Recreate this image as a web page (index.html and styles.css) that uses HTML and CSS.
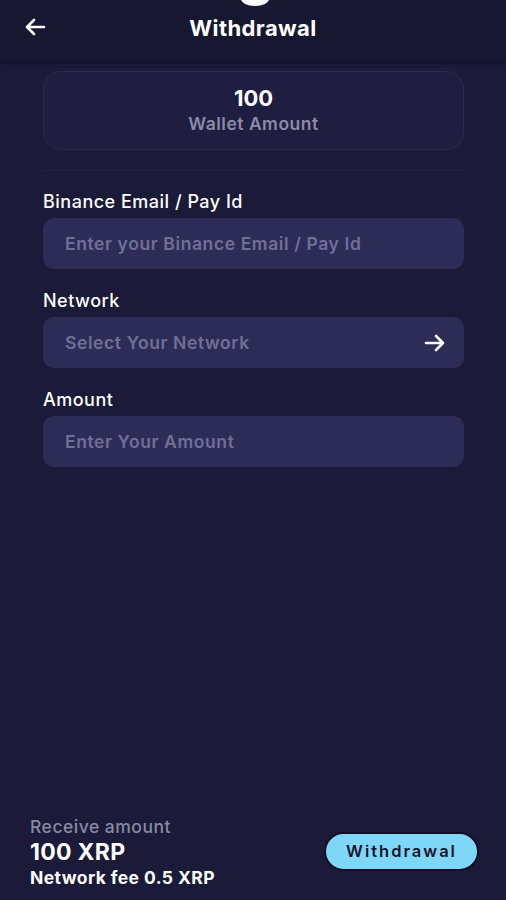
FILE: index.html
```html
<!DOCTYPE html>
<html lang="en">
<head>
  <meta charset="UTF-8">
  <title>Withdrawal</title>
  <meta name="viewport" content="width=device-width, initial-scale=1">
  <link rel="stylesheet" href="styles.css">
</head>
<body>
  <div class="screen">
    <header class="topbar">
      <span class="notch"></span>
      <a href="#" class="back">
        <svg width="22" height="18" viewBox="0 0 22 18"><path d="M20 9H3M10 2L3 9l7 7" fill="none" stroke="#fff" stroke-width="2.6" stroke-linecap="round" stroke-linejoin="round"/></svg>
      </a>
      <h1>Withdrawal</h1>
    </header>

    <main class="content">
      <div class="wallet">
        <div class="wallet-value">100</div>
        <div class="wallet-label">Wallet Amount</div>
      </div>
      <hr class="divider">

      <label class="field-label">Binance Email / Pay Id</label>
      <div class="field">Enter your Binance Email / Pay Id</div>

      <label class="field-label">Network</label>
      <div class="field select">
        <span>Select Your Network</span>
        <svg width="22" height="18" viewBox="0 0 22 18"><path d="M2 9h17M12 2l7 7-7 7" fill="none" stroke="#fff" stroke-width="2.6" stroke-linecap="round" stroke-linejoin="round"/></svg>
      </div>

      <label class="field-label">Amount</label>
      <div class="field">Enter Your Amount</div>
    </main>

    <footer class="summary">
      <div class="receive">
        <div class="receive-label">Receive amount</div>
        <div class="receive-value">100 XRP</div>
        <div class="receive-fee">Network fee 0.5 XRP</div>
      </div>
      <button class="submit">Withdrawal</button>
    </footer>
  </div>
</body>
</html>
```

FILE: styles.css
```css
* { box-sizing: border-box; }
body { margin: 0; background: #1b1a38; font-family: Inter, "Noto Sans", sans-serif; color: #fff; }

.screen {
  height: 900px;
  display: flex;
  flex-direction: column;
}

.topbar {
  position: relative;
  height: 61px;
  background: #181731;
  display: flex;
  align-items: center;
  justify-content: center;
  padding-bottom: 6px;
  box-shadow: 0 2px 3px rgba(10, 10, 30, 0.5);
}

.notch {
  position: absolute;
  top: -8px;
  left: 241px;
  width: 28px;
  height: 14px;
  border-radius: 50%;
  background: #fff;
}

.back {
  position: absolute;
  left: 24px;
  top: 18px;
  line-height: 0;
}

.topbar h1 {
  margin: 0;
  font-size: 22px;
  font-weight: 700;
  letter-spacing: 0.4px;
}

.content {
  padding: 10px 42px 0 43px;
  display: flex;
  flex-direction: column;
}

.wallet {
  height: 79px;
  border: 1px solid #2c2b4c;
  border-radius: 18px;
  background: #1f1e40;
  text-align: center;
  padding-top: 13px;
}

.wallet-value {
  font-size: 22px;
  font-weight: 700;
  line-height: 26px;
}

.wallet-label {
  font-size: 17.5px;
  font-weight: 600;
  letter-spacing: 0.5px;
  color: #8c8aa8;
  line-height: 26px;
}

.divider {
  border: 0;
  border-top: 1px solid #24233f;
  margin: 20px 0 0;
}

.field-label {
  font-size: 18px;
  font-weight: 500;
  letter-spacing: 0.5px;
  margin: 20px 0 5px;
  line-height: 22px;
}

.field {
  height: 51px;
  border-radius: 11px;
  background: #2d2c57;
  padding: 0 22px;
  display: flex;
  align-items: center;
  font-size: 17.5px;
  font-weight: 600;
  letter-spacing: 0.6px;
  color: #706f98;
}

.field + .field-label { margin-top: 21px; }

.select { justify-content: space-between; padding-right: 18px; }

.summary {
  margin-top: auto;
  padding: 0 27px 10px 30px;
  display: flex;
  align-items: center;
  justify-content: space-between;
}

.receive-label {
  font-size: 17.5px;
  font-weight: 500;
  letter-spacing: 0.5px;
  color: #8a89a5;
  line-height: 22px;
}

.receive-value {
  font-size: 23px;
  font-weight: 700;
  letter-spacing: 0.3px;
  line-height: 28px;
}

.receive-fee {
  font-size: 17.5px;
  font-weight: 700;
  letter-spacing: 0.4px;
  line-height: 24px;
}

.submit {
  width: 155px;
  height: 39px;
  border-radius: 20px;
  border: 2px solid #101024;
  background: #7fd7f7;
  color: #14142a;
  font-family: Inter, "Noto Sans", sans-serif;
  font-size: 16.5px;
  font-weight: 600;
  letter-spacing: 2px;
  margin-bottom: 4px;
}
```
